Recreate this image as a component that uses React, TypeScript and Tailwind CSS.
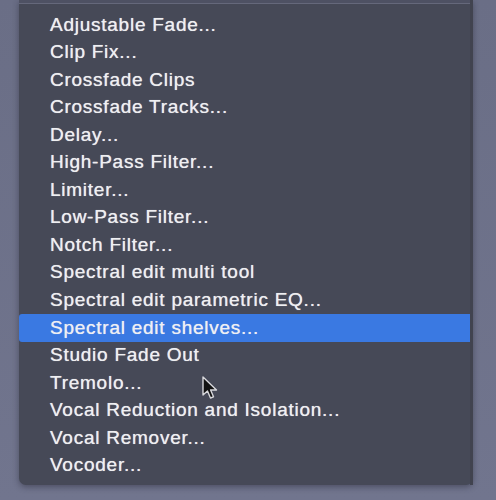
const items = [
  "Adjustable Fade...",
  "Clip Fix...",
  "Crossfade Clips",
  "Crossfade Tracks...",
  "Delay...",
  "High-Pass Filter...",
  "Limiter...",
  "Low-Pass Filter...",
  "Notch Filter...",
  "Spectral edit multi tool",
  "Spectral edit parametric EQ...",
  "Spectral edit shelves...",
  "Studio Fade Out",
  "Tremolo...",
  "Vocal Reduction and Isolation...",
  "Vocal Remover...",
  "Vocoder...",
];

function Cursor() {
  return (
    <svg
      className="absolute left-[201px] top-[376px]"
      width="20"
      height="26"
      viewBox="0 0 20 26"
    >
      <path
        d="M2 1 L2 19 L6.5 15 L9.5 22 L12.5 20.8 L9.6 14 L15.5 14 Z"
        fill="#111"
        stroke="#d8d8dc"
        strokeWidth="1.4"
        strokeLinejoin="round"
      />
    </svg>
  );
}

export default function App() {
  return (
    <div className="relative h-[500px] w-[496px] overflow-hidden bg-gradient-to-b from-[#6a6e86] to-[#71758e] pl-[19px] pr-[23px]">
      <div className="relative rounded-b-[7px] bg-[#464957] pb-[6px] shadow-[0_2px_6px_rgba(30,32,45,0.45)]">
        <div className="h-[3px] bg-[#4e5163]" />
        <div className="h-px bg-[#65687b]" />
        <div className="pt-[7px]">
          {items.map((item) => {
            const active = item === "Spectral edit shelves...";
            return (
              <div
                key={item}
                className={`flex h-[27.56px] items-center pl-[31px] font-['Liberation_Sans',Arial,sans-serif] text-[19px] tracking-[0.75px] text-[#efeff2] [text-shadow:0_0_0.7px_rgba(255,255,255,0.8)] ${
                  active ? "rounded-[3px] bg-[#3a79e2]" : ""
                }`}
              >
                {item}
              </div>
            );
          })}
        </div>
        <div className="absolute right-0 top-0 h-full w-[3px] bg-[#41434f]" />
      </div>
      <Cursor />
    </div>
  );
}
